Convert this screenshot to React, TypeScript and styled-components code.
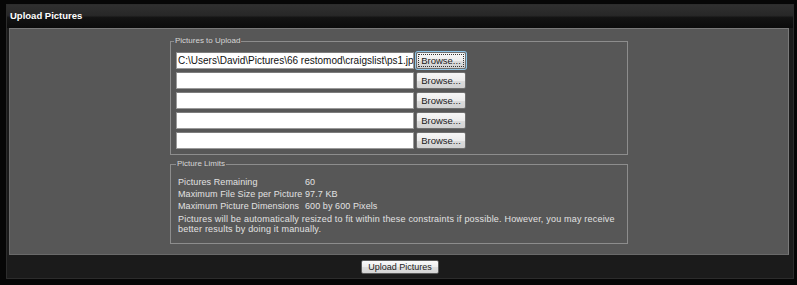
import React from 'react'
import styled, { createGlobalStyle } from 'styled-components'

const GlobalStyle = createGlobalStyle`
  html, body {
    margin: 0;
    padding: 0;
    background: #050505;
  }
  * {
    box-sizing: border-box;
  }
`

const Frame = styled.div`
  width: 797px;
  height: 285px;
  padding: 4px 3px 6px 6px;
  background: #060606;
  font-family: 'Liberation Sans', Arial, sans-serif;
`

const Window = styled.div`
  height: 100%;
  display: flex;
  flex-direction: column;
  border: 1px solid #2c2c2c;
  background: #1b1b1b;
`

const Header = styled.div`
  height: 23px;
  flex: none;
  padding: 0 0 3px 3px;
  display: flex;
  align-items: center;
  background: linear-gradient(
    to bottom,
    #2f2f2f 0%,
    #282828 45%,
    #131313 55%,
    #0b0b0b 100%
  );
  color: #fff;
  font-size: 9.5px;
  font-weight: bold;
`

const Panel = styled.div`
  height: 227px;
  flex: none;
  margin: 0 4px 0 2px;
  background: #575757;
  border: 1px solid #7a7a7a;
  border-left-color: #6a6a6a;
  border-bottom-color: #6a6a6a;
  display: flex;
  flex-direction: column;
  align-items: center;
`

const Group = styled.fieldset<{ $top: number; $pad: string }>`
  width: 458px;
  margin: ${(p) => p.$top}px 0 0 0;
  padding: ${(p) => p.$pad};
  border: 1px solid #8d8d8d;
  min-width: 0;
`

const Legend = styled.legend`
  font-size: 8px;
  line-height: 10px;
  color: #d6d6d6;
  padding: 0 1px;
  margin-left: -2px;
`

const FileRow = styled.div`
  display: flex;
  gap: 2px;
  height: 17px;
  & + & {
    margin-top: 3px;
  }
`

const PathBox = styled.div`
  width: 238px;
  height: 17px;
  background: #fff;
  border: 1px solid #9a9a9a;
  border-top-color: #7d7d7d;
  color: #111;
  font-size: 10px;
  line-height: 15px;
  padding-left: 1px;
  white-space: nowrap;
  overflow: hidden;
`

const BrowseButton = styled.button<{ $focused?: boolean }>`
  width: 50px;
  height: 17px;
  padding: 0;
  margin: 0;
  border: 1px solid #707070;
  border-radius: 2px;
  background: linear-gradient(to bottom, #f6f6f6 0%, #ececec 50%, #dcdcdc 51%, #d2d2d2 100%);
  color: #1a1a1a;
  font-family: 'Liberation Sans', Arial, sans-serif;
  font-size: 9.5px;
  line-height: 15px;
  outline: ${(p) => (p.$focused ? '1px dotted #333' : 'none')};
  outline-offset: -3px;
  box-shadow: ${(p) => (p.$focused ? '0 0 0 1px #8fc6e8' : 'none')};
`

const Limits = styled.div`
  display: grid;
  grid-template-columns: 127px 1fr;
  font-size: 9px;
  line-height: 12px;
  letter-spacing: 0.08px;
  color: #e2e2e2;
`

const Note = styled.p`
  margin: 2px 0 0 0;
  font-size: 9px;
  line-height: 10px;
  letter-spacing: 0.2px;
  color: #e2e2e2;
`

const Footer = styled.div`
  flex: 1;
  display: flex;
  align-items: center;
  justify-content: center;
  padding-top: 1px;
`

const SubmitButton = styled.button`
  width: 78px;
  height: 14px;
  padding: 0;
  border: 1px solid #5a5a5a;
  border-radius: 2px;
  background: linear-gradient(to bottom, #fafafa 0%, #ededed 50%, #dedede 51%, #d4d4d4 100%);
  color: #222;
  font-family: 'Liberation Sans', Arial, sans-serif;
  font-size: 9px;
  line-height: 12px;
`

const files = [
  'C:\\Users\\David\\Pictures\\66 restomod\\craigslist\\ps1.jpg',
  '',
  '',
  '',
  '',
]

const limits: [string, string][] = [
  ['Pictures Remaining', '60'],
  ['Maximum File Size per Picture', '97.7 KB'],
  ['Maximum Picture Dimensions', '600 by 600 Pixels'],
]

export default function App() {
  return (
    <>
      <GlobalStyle />
      <Frame>
        <Window>
          <Header>Upload Pictures</Header>
          <Panel>
            <Group $top={7} $pad="6px 5px 5px 5px">
              <Legend>Pictures to Upload</Legend>
              {files.map((f, i) => (
                <FileRow key={i}>
                  <PathBox>{f}</PathBox>
                  <BrowseButton $focused={i === 0}>Browse...</BrowseButton>
                </FileRow>
              ))}
            </Group>
            <Group $top={4} $pad="7px 4px 9px 7px">
              <Legend>Picture Limits</Legend>
              <Limits>
                {limits.map(([k, v]) => (
                  <React.Fragment key={k}>
                    <span>{k}</span>
                    <span>{v}</span>
                  </React.Fragment>
                ))}
              </Limits>
              <Note>
                Pictures will be automatically resized to fit within these
                constraints if possible. However, you may receive better results
                by doing it manually.
              </Note>
            </Group>
          </Panel>
          <Footer>
            <SubmitButton>Upload Pictures</SubmitButton>
          </Footer>
        </Window>
      </Frame>
    </>
  )
}
